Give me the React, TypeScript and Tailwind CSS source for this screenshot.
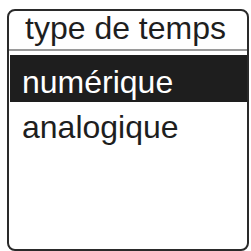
export default function App() {
  return (
    <div className="w-[251px] h-[251px] bg-white overflow-hidden" style={{ fontFamily: '"Liberation Sans", Arial, sans-serif' }}>
      <div className="ml-[7px] mt-[9px] w-[242px] h-[242px] border-2 border-[#2a2a2a] rounded-[8px] overflow-hidden flex flex-col">
        <div className="h-[40px] border-b-2 border-[#9a9a9a] pl-[16px] text-[32px] leading-[34px] text-[#1e1e1e]">
          type de temps
        </div>
        <div className="mt-[4px] ml-[1px] h-[47px] bg-[#1e1e1e] pl-[12px] pt-[9px] text-[32px] leading-[37px] text-white">
          numérique
        </div>
        <div className="pl-[13px] pt-[2px] text-[32px] leading-[47px] text-[#1e1e1e]">
          analogique
        </div>
      </div>
    </div>
  );
}
